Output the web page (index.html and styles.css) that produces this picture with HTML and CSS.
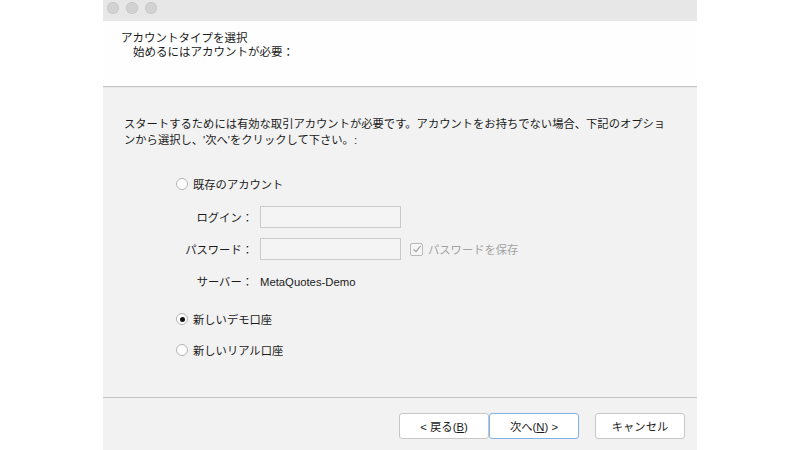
FILE: index.html
```html
<!DOCTYPE html>
<html lang="ja">
<head>
<meta charset="utf-8">
<link rel="stylesheet" href="styles.css">
</head>
<body>
<div class="window">
  <div class="titlebar">
    <span class="light"></span><span class="light"></span><span class="light"></span>
  </div>
  <div class="header">
    <div class="title">アカウントタイプを選択</div>
    <div class="subtitle">始めるにはアカウントが必要：</div>
  </div>
  <div class="content">
    <p class="intro">スタートするためには有効な取引アカウントが必要です。アカウントをお持ちでない場合、下記のオプショ<br>ンから選択し、'次へ'をクリックして下さい。:</p>
    <div class="options">
      <div class="radio-row first"><span class="radio"></span><span>既存のアカウント</span></div>
      <div class="fields">
        <span class="flabel">ログイン：</span><span class="input"></span><span></span>
        <span class="flabel">パスワード：</span><span class="input"></span>
        <span class="save"><span class="checkbox"><svg width="10" height="10" viewBox="0 0 10 10"><path d="M1.5 5.2 L4 7.6 L8.6 1.8" fill="none" stroke="#a8a8a8" stroke-width="1.3"/></svg></span>パスワードを保存</span>
        <span class="flabel">サーバー：</span><span class="server">MetaQuotes-Demo</span><span></span>
      </div>
      <div class="radio-row demo"><span class="radio checked"></span><span>新しいデモ口座</span></div>
      <div class="radio-row real"><span class="radio"></span><span>新しいリアル口座</span></div>
    </div>
  </div>
  <div class="footer">
    <button class="btn">&lt; 戻る(<u>B</u>)</button>
    <button class="btn focus">次へ(<u>N</u>) &gt;</button>
    <button class="btn cancel">キャンセル</button>
  </div>
</div>
</body>
</html>
```
FILE: styles.css
```css
html, body {
  margin: 0;
  padding: 0;
  background: #ffffff;
}
body {
  font-family: "Liberation Sans", "Noto Sans CJK JP", sans-serif;
  font-size: 11.3px;
  color: #1b1b1b;
}
.window {
  width: 594px;
  height: 450px;
  margin: 0 auto;
  display: flex;
  flex-direction: column;
  background: #f2f2f2;
}
.titlebar {
  height: 21px;
  background: #e7e7e7;
  display: flex;
  align-items: flex-start;
  gap: 7px;
  padding: 2px 0 0 4px;
  box-sizing: border-box;
}
.light {
  width: 12px;
  height: 12px;
  border-radius: 50%;
  background: #d1d1d1;
  box-shadow: inset 0 0 0 0.5px #c2c2c2;
}
.header {
  height: 65px;
  background: #fefefe;
  border-bottom: 1px solid #c4c4c4;
  padding: 0 0 0 18px;
  display: flex;
  flex-direction: column;
}
.title {
  margin-top: 10px;
  line-height: 14px;
  font-size: 11.5px;
}
.subtitle {
  line-height: 14px;
  padding-left: 12px;
  font-size: 11.5px;
}
.content {
  flex: 1;
  border-top: 1px solid #e9e9e9;
  border-bottom: 1px solid #c4c4c4;
  display: flex;
  flex-direction: column;
}
.intro {
  margin: 28px 0 0 21px;
  line-height: 16px;
}
.options {
  display: flex;
  flex-direction: column;
  padding-left: 73px;
}
.radio-row {
  display: flex;
  align-items: center;
  gap: 5px;
  height: 16px;
}
.radio-row.first { margin-top: 28px; }
.radio-row.demo { margin-top: 19px; }
.radio-row.real { margin-top: 15px; }
.radio {
  width: 10px;
  height: 10px;
  border-radius: 50%;
  border: 1px solid #b3b3b3;
  background: #ffffff;
  display: flex;
  align-items: center;
  justify-content: center;
}
.radio.checked::after {
  content: "";
  width: 5px;
  height: 5px;
  border-radius: 50%;
  background: #111111;
}
.fields {
  display: grid;
  grid-template-columns: 77px 141px auto;
  grid-template-rows: 22px 22px 22px;
  row-gap: 10px;
  column-gap: 7px;
  align-items: center;
  margin-top: 14px;
}
.flabel {
  text-align: right;
}
.input {
  height: 20px;
  border: 1px solid #c9c9c9;
  background: #f4f4f4;
}
.server {
  margin-top: 2px;
}
.save {
  display: flex;
  align-items: center;
  gap: 5px;
  color: #a3a3a3;
  margin-left: 2px;
}
.checkbox {
  width: 11px;
  height: 11px;
  border: 1px solid #b9b9b9;
  border-radius: 2px;
  background: #f6f6f6;
  display: flex;
  align-items: center;
  justify-content: center;
}
.footer {
  height: 52px;
  display: flex;
  justify-content: flex-end;
  align-items: flex-start;
  padding: 15px 12px 0 0;
  box-sizing: border-box;
}
.btn {
  width: 90px;
  height: 26px;
  background: #ffffff;
  border: 1px solid #c6c6c6;
  border-radius: 3px;
  font-family: "Liberation Sans", "Noto Sans CJK JP", sans-serif;
  font-size: 11.3px;
  color: #1b1b1b;
  padding: 0;
}
.btn u { text-decoration: underline; }
.btn.focus {
  border-color: #7fb0e8;
}
.btn.cancel {
  margin-left: 16px;
}
```
